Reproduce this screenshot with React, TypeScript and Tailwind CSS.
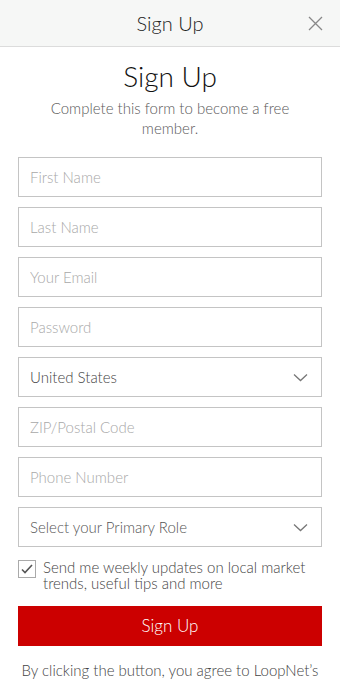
import { useState } from 'react';

const font = { fontFamily: 'Lato, "Open Sans", sans-serif' };

function Field({ placeholder }: { placeholder: string }) {
  return (
    <input
      type="text"
      placeholder={placeholder}
      className="h-10 w-full border border-[#c4c4c4] bg-white px-[11px] text-[15px] font-light text-[#555] placeholder:text-[#a8a8a8] outline-none"
      style={font}
    />
  );
}

function Select({ label, muted }: { label: string; muted?: boolean }) {
  return (
    <div className="flex h-10 w-full items-center justify-between border border-[#c4c4c4] bg-white pl-[11px] pr-[13px]">
      <span className={muted ? 'text-[15px] text-[#555]' : 'text-[15px] text-[#444]'}>{label}</span>
      <svg width="15" height="9" viewBox="0 0 15 9" fill="none" stroke="#777" strokeWidth="1.3">
        <path d="M1 1.5l6.5 6 6.5-6" />
      </svg>
    </div>
  );
}

export default function App() {
  const [checked, setChecked] = useState(true);

  return (
    <div className="min-h-screen bg-white font-light" style={font}>
      <header className="relative flex h-[47px] items-center justify-center border-b border-[#dcdcdc] bg-[#f6f7f6]">
        <h2 className="text-[20px] text-[#222]">Sign Up</h2>
        <button className="absolute right-[17px] top-[16px]">
          <svg width="15" height="15" viewBox="0 0 15 15" stroke="#888" strokeWidth="1.3">
            <path d="M1 1l13 13M14 1L1 14" />
          </svg>
        </button>
      </header>

      <main className="px-[18px]">
        <h1 className="mt-[12px] text-center text-[28px] leading-[34px] text-[#111]">Sign Up</h1>
        <p className="mx-auto mt-[5px] w-[270px] text-center text-[15px] leading-[20px] text-[#5a5a5a]">
          Complete this form to become a free member.
        </p>

        <form className="mt-[19px] flex flex-col gap-[10px]">
          <Field placeholder="First Name" />
          <Field placeholder="Last Name" />
          <Field placeholder="Your Email" />
          <Field placeholder="Password" />
          <Select label="United States" />
          <Field placeholder="ZIP/Postal Code" />
          <Field placeholder="Phone Number" />
          <Select label="Select your Primary Role" muted />
        </form>

        <label className="mt-[12px] flex items-start gap-[7px]" onClick={() => setChecked(!checked)}>
          <span className="mt-[1px] flex h-[18px] w-[18px] shrink-0 items-center justify-center border border-[#aaa] bg-white">
            {checked && (
              <svg width="12" height="10" viewBox="0 0 12 10" fill="none" stroke="#555" strokeWidth="1.6">
                <path d="M1 5.5l3 3L11 1" />
              </svg>
            )}
          </span>
          <span className="text-[15px] leading-[16px] text-[#444]">
            Send me weekly updates on local market trends, useful tips and more
          </span>
        </label>

        <button className="mt-[15px] h-10 w-full bg-[#cc0000] text-[17px] text-white">Sign Up</button>

        <p className="mt-[14px] text-center text-[15px] leading-[20px] text-[#444]">
          By clicking the button, you agree to LoopNet’s Terms of Use and Privacy Policy
        </p>
      </main>
    </div>
  );
}
